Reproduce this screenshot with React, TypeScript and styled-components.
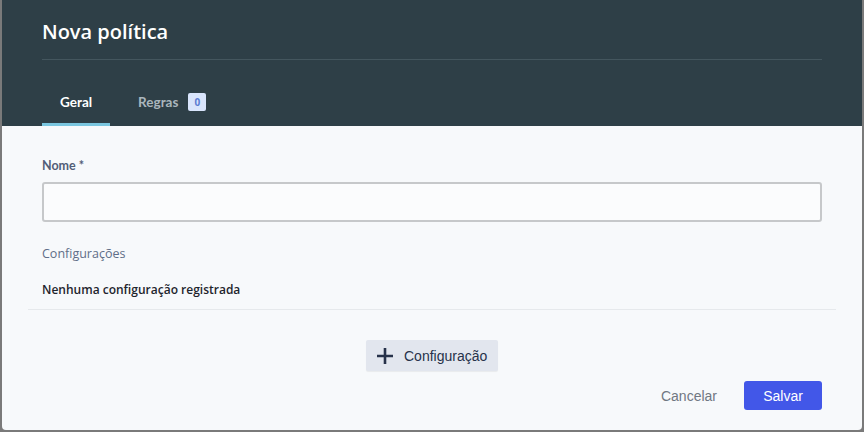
import React from "react";
import styled, { createGlobalStyle } from "styled-components";

const GlobalStyle = createGlobalStyle`
  html, body {
    margin: 0;
    padding: 0;
    background: #7a7a7a;
  }
  * { box-sizing: border-box; }
`;

const Backdrop = styled.div`
  width: 864px;
  height: 432px;
  padding: 0 2px 2px 2px;
  display: flex;
`;

const Modal = styled.div`
  flex: 1;
  display: flex;
  flex-direction: column;
  background: #f7f9fb;
  border-radius: 0 0 4px 4px;
  overflow: hidden;
  font-family: "Open Sans", "Liberation Sans", sans-serif;
`;

const Header = styled.header`
  background: #2e3f47;
  padding: 0 40px;
`;

const Title = styled.h1`
  margin: 0;
  padding: 20px 0 15px;
  font-size: 20px;
  line-height: 24px;
  font-weight: 600;
  color: #ffffff;
  border-bottom: 1px solid #44565e;
`;

const TabList = styled.div`
  display: flex;
  gap: 10px;
`;

const Tab = styled.div<{ $active?: boolean }>`
  display: flex;
  align-items: center;
  gap: 10px;
  padding: 33px 18px 12px;
  line-height: 18px;
  font-family: Lato, "Open Sans", sans-serif;
  font-size: 13.5px;
  font-weight: 700;
  color: ${(p) => (p.$active ? "#ffffff" : "#aab6bd")};
  border-bottom: 3px solid ${(p) => (p.$active ? "#7ac6df" : "transparent")};
`;

const Badge = styled.span`
  display: inline-flex;
  align-items: center;
  justify-content: center;
  width: 18px;
  height: 18px;
  border-radius: 2px;
  background: #d9e5fc;
  color: #5b7cd2;
  font-family: "Open Sans", sans-serif;
  font-size: 10px;
  font-weight: 700;
`;

const Body = styled.div`
  flex: 1;
  display: flex;
  flex-direction: column;
  padding: 32px 40px 20px;
`;

const Label = styled.label`
  font-family: Lato, "Open Sans", sans-serif;
  font-size: 12.5px;
  line-height: 16px;
  font-weight: 700;
  color: #525e77;
`;

const Input = styled.input`
  margin-top: 8px;
  height: 40px;
  width: 100%;
  border: 2px solid #c6c8ca;
  border-radius: 3px;
  background: #fbfcfd;
  outline: none;
`;

const SectionTitle = styled.div`
  margin-top: 24px;
  font-size: 12.5px;
  line-height: 16px;
  color: #5f6e88;
`;

const EmptyText = styled.div`
  margin-top: 20px;
  font-size: 12px;
  line-height: 16px;
  font-weight: 600;
  color: #1e252d;
`;

const Divider = styled.hr`
  margin: 11px -14px 0;
  border: 0;
  border-top: 1px solid #e6e9ec;
`;

const AddRow = styled.div`
  display: flex;
  justify-content: center;
  margin-top: 30px;
`;

const AddButton = styled.button`
  display: inline-flex;
  align-items: center;
  gap: 10px;
  height: 31px;
  width: 132px;
  padding: 0 10px;
  border: 0;
  border-radius: 2px;
  background: #e2e6ee;
  box-shadow: 0 1px 1px rgba(0, 0, 0, 0.06);
  font-family: "Liberation Sans", Arial, sans-serif;
  font-size: 14px;
  color: #27324a;
`;

const Footer = styled.div`
  display: flex;
  justify-content: flex-end;
  align-items: center;
  gap: 27px;
  margin-top: 10px;
`;

const TextButton = styled.button`
  border: 0;
  background: transparent;
  padding: 0;
  font-family: "Liberation Sans", Arial, sans-serif;
  font-size: 14px;
  color: #707782;
`;

const PrimaryButton = styled.button`
  height: 29px;
  width: 78px;
  border: 0;
  border-radius: 3px;
  background: #4257e8;
  color: #ffffff;
  font-family: "Liberation Sans", Arial, sans-serif;
  font-size: 14px;
`;

const PlusIcon = () => (
  <svg width="18" height="18" viewBox="0 0 18 18" aria-hidden="true">
    <path d="M9 1v16M1 9h16" stroke="#27324a" strokeWidth="2.6" />
  </svg>
);

export default function App() {
  return (
    <>
      <GlobalStyle />
      <Backdrop>
        <Modal>
          <Header>
            <Title>Nova política</Title>
            <TabList>
              <Tab $active>Geral</Tab>
              <Tab>
                Regras <Badge>0</Badge>
              </Tab>
            </TabList>
          </Header>
          <Body>
            <Label>Nome *</Label>
            <Input type="text" />
            <SectionTitle>Configurações</SectionTitle>
            <EmptyText>Nenhuma configuração registrada</EmptyText>
            <Divider />
            <AddRow>
              <AddButton>
                <PlusIcon />
                Configuração
              </AddButton>
            </AddRow>
            <Footer>
              <TextButton>Cancelar</TextButton>
              <PrimaryButton>Salvar</PrimaryButton>
            </Footer>
          </Body>
        </Modal>
      </Backdrop>
    </>
  );
}
